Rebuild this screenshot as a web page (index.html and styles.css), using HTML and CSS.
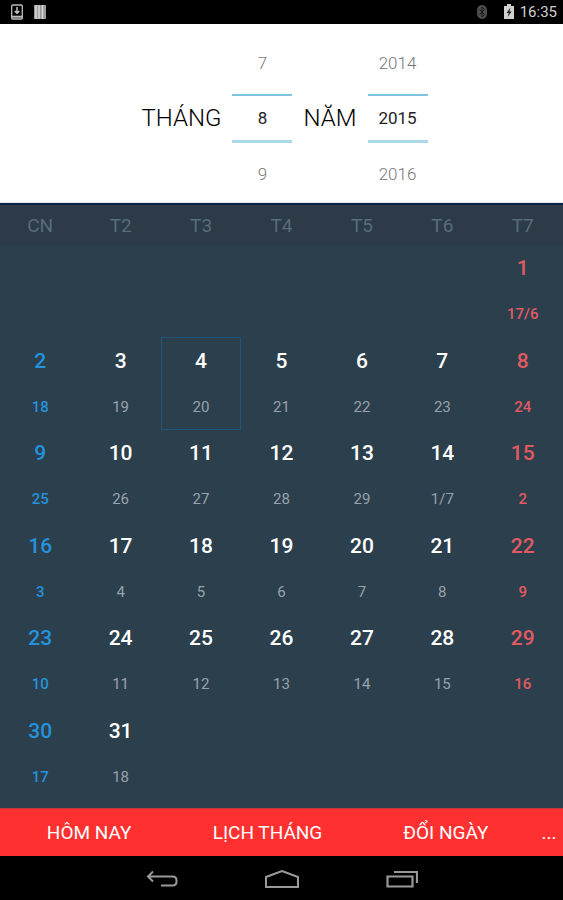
FILE: index.html
```html
<!DOCTYPE html>
<html lang="vi">
<head>
    <meta charset="UTF-8">
    <meta name="viewport" content="width=device-width, initial-scale=1.0">
    <title>Lịch tháng</title>
    <link rel="stylesheet" href="styles.css">
</head>
<body>
    <header class="status">
        <svg class="status-icon" viewBox="0 0 16 16" aria-hidden="true">
            <rect x="2.7" y="1" width="10.6" height="14" rx="1" fill="none" stroke="#bbb" stroke-width="1.3"/>
            <path d="M8 3v6M5.7 7L8 9.3 10.3 7" fill="none" stroke="#ccc" stroke-width="1.4"/>
            <path d="M3 12.7h10" stroke="#bbb" stroke-width="2"/>
        </svg>
        <svg class="status-icon" viewBox="0 0 16 16" aria-hidden="true">
            <path d="M2 1h12v14H2z" fill="#999"/>
            <path d="M4 1v14M7 1v14M10.5 1v14" stroke="#d8d8d8" stroke-width="1.5"/>
        </svg>
        <span class="status-space"></span>
        <svg class="status-icon bluetooth" viewBox="0 0 16 16" aria-hidden="true">
            <rect x="3" y="1" width="10" height="14" rx="5" fill="#4c4c4c"/>
            <path d="M5.5 5.5l5 5L8 13V3l2.5 2.5-5 5" fill="none" stroke="#161616"/>
        </svg>
        <svg class="status-icon" viewBox="0 0 16 16" aria-hidden="true">
            <path d="M6 0h4v2h3v13H3V2h3z" fill="#d0d0d0"/>
            <path d="M9.5 3.5L5.5 9h2.2l-1 4 4-5.5H8.5z" fill="#222"/>
        </svg>
        <time class="clock">16:35</time>
    </header>

    <form class="picker">
        <label class="picker-label" for="month">THÁNG</label>
        <div class="wheel">
            <button type="button">7</button>
            <input type="text" id="month" value="8" inputmode="numeric">
            <button type="button">9</button>
        </div>
        <label class="picker-label" for="year">NĂM</label>
        <div class="wheel">
            <button type="button">2014</button>
            <input type="text" id="year" value="2015" inputmode="numeric">
            <button type="button">2016</button>
        </div>
    </form>

    <main class="calendar">
        <table>
            <thead>
                <tr>
                    <th>CN</th>
                    <th>T2</th>
                    <th>T3</th>
                    <th>T4</th>
                    <th>T5</th>
                    <th>T6</th>
                    <th>T7</th>
                </tr>
            </thead>
            <tbody id="days"></tbody>
        </table>
    </main>

    <div class="actions">
        <button type="button">HÔM NAY</button>
        <button type="button">LỊCH THÁNG</button>
        <button type="button">ĐỔI NGÀY</button>
        <button type="button">...</button>
    </div>

    <nav class="navbar">
        <button type="button" aria-label="Quay lại">
            <svg viewBox="0 0 32 20"><path d="M7 1.5l-5 5 5 5M2.5 6.5h24q4 0 4 4v1q0 4-4 4H15" fill="none" stroke="#999" stroke-width="2"/></svg>
        </button>
        <button type="button" aria-label="Màn hình chính">
            <svg class="home" viewBox="0 0 36 20"><path d="M2 17V7l16-6 16 6v10z" fill="none" stroke="#999" stroke-width="2"/></svg>
        </button>
        <button type="button" aria-label="Ứng dụng gần đây">
            <svg viewBox="0 0 32 20"><path d="M1.5 6.5h25v10h-25zM8 2h23v11" fill="none" stroke="#999" stroke-width="2.2"/></svg>
        </button>
    </nav>

    <script>
        const body = document.getElementById("days");
        const firstColumn = 6;
        const selected = 4;

        // Ngày âm lịch: 1/8 là 17/6, ngày 14/8 là 1/7
        function lunar(day) {
            if (day === 1) return "17/6";
            if (day === 14) return "1/7";
            return day < 14 ? day + 16 : day - 13;
        }

        for (let week = 0; week < 6; week++) {
            const row = body.insertRow();
            for (let col = 0; col < 7; col++) {
                const cell = row.insertCell();
                const day = week * 7 + col - firstColumn + 1;
                if (day < 1 || day > 31) continue;
                if (day === selected) cell.className = "selected";
                cell.innerHTML = '<button type="button" class="day"><span class="solar">' + day +
                    '</span><span class="lunar">' + lunar(day) + '</span></button>';
            }
        }
    </script>
</body>
</html>
```

FILE: styles.css
```css
* {
    box-sizing: border-box;
}

body {
    margin: 0;
    min-height: 100vh;
    display: flex;
    flex-direction: column;
    background-color: #000;
    font-family: Roboto, "Liberation Sans", sans-serif;
}

button,
input {
    font-family: inherit;
    border: none;
    background: none;
    padding: 0;
    margin: 0;
}

button {
    cursor: pointer;
}

/* Thanh trạng thái */
.status {
    height: 24px;
    display: flex;
    align-items: center;
    gap: 7px;
    padding: 0 6px 0 9px;
    color: #d0d0d0;
}

.status-icon {
    width: 16px;
    height: 16px;
}

.status-space {
    flex: 1;
}

.bluetooth {
    margin-right: 4px;
}

.clock {
    font-size: 15px;
    margin-left: -4px;
}

/* Chọn tháng và năm */
.picker {
    height: 179px;
    display: flex;
    justify-content: center;
    align-items: center;
    gap: 11px;
    padding-left: 6px;
    background-color: #fff;
    border-bottom: 1px solid #e4e8ea;
}

.picker-label {
    font-size: 24px;
    font-weight: 300;
    line-height: 28px;
    color: #000;
    padding-top: 10px;
}

.wheel {
    width: 60px;
    display: flex;
    flex-direction: column;
    padding-top: 10px;
}

.wheel button {
    height: 62px;
    font-size: 17px;
    font-weight: 300;
    color: #777;
}

.wheel input {
    width: 100%;
    height: 49px;
    text-align: center;
    font-size: 17px;
    color: #222;
    border-top: 2px solid #7cc6df;
    border-bottom: 3px solid #abd9e9;
}

/* Lịch */
.calendar {
    flex: 1;
    background-color: #2c3f4d;
    border-top: 2px solid #0c2444;
}

table {
    width: 100%;
    table-layout: fixed;
    border-collapse: collapse;
}

th {
    height: 40px;
    padding: 0;
    font-size: 19px;
    font-weight: 400;
    color: #586c79;
    background-color: #2c3b47;
}

td {
    height: 92px;
    padding: 0;
    text-align: center;
}

tr:nth-child(even) td {
    height: 93px;
}

.selected {
    outline: 1px solid #225477;
    outline-offset: -1px;
}

.day {
    width: 100%;
    height: 92px;
    display: grid;
    grid-template-rows: 46px 46px;
    align-items: center;
    color: #fff;
}

.solar {
    font-size: 21px;
    font-weight: 500;
}

.lunar {
    font-size: 15px;
    color: #98a2aa;
}

td:first-child .solar,
td:first-child .lunar {
    color: #2492dc;
}

td:last-child .solar,
td:last-child .lunar {
    color: #e05b61;
}

td:first-child .lunar,
td:last-child .lunar {
    font-weight: 500;
}

/* Các nút chức năng */
.actions {
    height: 48px;
    display: grid;
    grid-template-columns: 1fr 1fr 1fr 28px;
    background-color: #ff3030;
    border-top: 1px solid #c23a40;
}

.actions button {
    font-size: 19px;
    color: #fff;
}

/* Thanh điều hướng */
.navbar {
    height: 44px;
    display: flex;
    justify-content: center;
    padding-top: 4px;
}

.navbar button {
    width: 120px;
    display: flex;
    justify-content: center;
    align-items: center;
}

.navbar svg {
    width: 32px;
    height: 20px;
}

.navbar .home {
    width: 36px;
}
```
